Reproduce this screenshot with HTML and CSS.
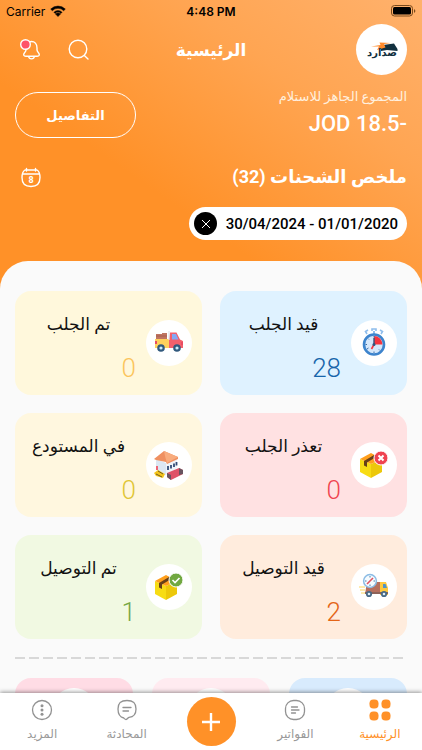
FILE: index.html
```html
<!DOCTYPE html>
<html lang="ar" dir="rtl">
<head>
    <meta charset="UTF-8">
    <meta name="viewport" content="width=device-width, initial-scale=1.0">
    <title>الرئيسية</title>
    <link rel="stylesheet" href="styles.css">
</head>
<body>

    <!-- Status bar -->
    <div class="status-bar" dir="ltr">
        <div class="carrier">
            <span>Carrier</span>
            <svg width="16" height="12" viewBox="0 0 16 12"><path d="M8 11.6 5.600 9.100a3.400 3.400 0 0 1 4.800 0zM3.900 7.300a5.800 5.800 0 0 1 8.200 0l-1.200 1.200a4.100 4.100 0 0 0-5.800 0zM.7 4.100a10.300 10.300 0 0 1 14.600 0l-1.600 1.600a8 8 0 0 0-11.400 0z" stroke="#000" stroke-width=".5"/></svg>
        </div>
        <span class="clock">4:48 PM</span>
        <div class="battery">
            <svg width="25" height="12" viewBox="0 0 25 12"><rect x=".5" y=".5" width="21" height="10.500" rx="3" fill="none" stroke="#7a4a1c"/><rect x="2" y="2" width="18" height="7.500" rx="1.500"/><path d="M23 4v4q1.400-.8 1.400-2T23 4z" fill="#7a4a1c"/></svg>
        </div>
    </div>

    <header class="header">
        <div class="top-row">
            <div class="logo">
                <svg width="34" height="24" viewBox="0 0 34 24">
                    <path d="M16 10 18 7l11-1.500 3.500 5.500v2L22 12l-6 1z" fill="#12303f"/>
                    <path d="M6 8.500 15.500 7l-1-2.500L26 5l-7 1 1.500 3.500L12 12l2-3.500z" fill="#ff8a2b"/>
                    <text x="17" y="18" text-anchor="middle" class="logo-text">صدارد</text>
                </svg>
            </div>
            <h1>الرئيسية</h1>
            <div class="actions">
                <button type="button" class="icon-btn" aria-label="بحث">
                    <svg width="24" height="24" viewBox="0 0 24 24"><circle cx="11" cy="11" r="8.800"/><path d="m17.600 17.800 3.400 3.200"/></svg>
                </button>
                <button type="button" class="icon-btn" aria-label="الإشعارات">
                    <svg width="24" height="24" viewBox="0 0 24 24"><path d="M7 10c0-4 2.300-6.500 5.500-6.500S18 6 18 10v2c0 1.200.6 1.900 1.600 3 1.400 1.600.7 3.200-1.400 3.200H6.800c-2.100 0-2.800-1.600-1.400-3.200 1-1.100 1.600-1.800 1.600-3zM9.600 18.500c.5 3.200 5.300 3.200 5.800 0"/><circle class="dot" cx="6.500" cy="6.500" r="4.800"/></svg>
                </button>
            </div>
        </div>

        <div class="balance-row">
            <div class="balance">
                <p class="balance-label">المجموع الجاهز للاستلام</p>
                <p class="amount"><bdi dir="ltr">JOD 18.5-</bdi></p>
            </div>
            <button type="button" class="details-btn">التفاصيل</button>
        </div>

        <div class="summary-row">
            <h2>ملخص الشحنات (32)</h2>
            <button type="button" class="icon-btn" aria-label="التاريخ">
                <svg width="24" height="24" viewBox="0 0 24 24"><path d="M6 5h12c2.200 1.300 3 3.500 3 7.500 0 6-2.800 9-9 9s-9-3-9-9C3 8.500 3.800 6.300 6 5zM3.500 9h17M7.500 3.500v2.500M16.500 3.500v2.500"/><text x="12" y="18" text-anchor="middle" class="cal-day">8</text></svg>
            </button>
        </div>

        <div class="date-chip">
            <bdi dir="ltr">30/04/2024 - 01/01/2020</bdi>
            <button type="button" class="clear-btn" aria-label="مسح">
                <svg width="10" height="10" viewBox="0 0 10 10"><path d="m1 1 8 8M9 1 1 9"/></svg>
            </button>
        </div>
    </header>

    <main class="sheet">
        <div class="cards">
            <a href="#" class="card blue">
                <span class="card-icon">
                    <svg width="30" height="30" viewBox="0 0 30 30">
                        <path d="M8 6 6.500 3.500 9 2M22 6l1.500-2.500L21 2M13 3V1h4v2" fill="none" stroke="#8fbdec" stroke-width="1.600"/>
                        <path d="M15 3v3" stroke="#8fbdec" stroke-width="2"/>
                        <circle cx="15" cy="16.500" r="10" fill="#d6e8fb" stroke="#3d84cd" stroke-width="2.600"/>
                        <path d="M15 16.500V8a8.500 8.500 0 0 1 8.500 8.500z" fill="#f5343f"/>
                        <path d="M15 8v1.500M6.500 16.500H8M15 25v-1.500M9 10.500l1 1M21 22.500l-1-1M8 21l1.500-1" stroke="#3d6da5"/>
                        <path d="M15 10v6.500" stroke="#32547e" stroke-width="1.400"/>
                        <path d="m15 16.500-2.500 4.500" stroke="#f5343f" stroke-width="1.600"/>
                        <circle cx="15" cy="16.500" r="1.500" fill="#32547e"/>
                    </svg>
                </span>
                <span class="card-text"><span class="card-title">قيد الجلب</span><span class="card-num">28</span></span>
            </a>
            <a href="#" class="card yellow">
                <span class="card-icon">
                    <svg width="30" height="30" viewBox="0 0 30 30">
                        <path d="M2 6h6V5h5v6H2z" fill="#bf7561"/><path d="M2 8h11" stroke="#a85e50"/>
                        <path d="M1 11h15v9H1z" fill="#ffd15c"/>
                        <path d="M16 4.500h6.500l3.500 7 3 1.500v7H15v-9z" fill="#f3606c"/>
                        <path d="M15 3v9" stroke="#dfe5ea" stroke-width="1.200"/>
                        <path d="M18 6h4l2.500 5.500H18z" fill="#85a8f5"/>
                        <path d="M1 13h2v3H1zM27 14h2v3h-2z" fill="#e94b62"/>
                        <g fill="#c9edfa" stroke="#31597d" stroke-width="2.200"><circle cx="7" cy="20" r="2.700"/><circle cx="23" cy="20" r="2.700"/></g>
                    </svg>
                </span>
                <span class="card-text"><span class="card-title">تم الجلب</span><span class="card-num">0</span></span>
            </a>
            <a href="#" class="card red">
                <span class="card-icon">
                    <svg width="30" height="30" viewBox="0 0 30 30">
                        <path d="m1 9 11 5v14L1 22z" fill="#f7dc14"/><path d="m12 14 11-5v13l-11 6z" fill="#ecc80a"/>
                        <path d="m1 9 11-6 11 6-11 5z" fill="#ff9f1c"/>
                        <path d="m5 11 10-6 3 1.400-10 6V17l-3-1.500z" fill="#674019"/>
                        <circle cx="22" cy="8" r="7" fill="#ef4351" stroke="#fff"/>
                        <path d="m19.500 5.500 5 5m0-5-5 5" stroke="#fff" stroke-width="2"/>
                    </svg>
                </span>
                <span class="card-text"><span class="card-title">تعذر الجلب</span><span class="card-num">0</span></span>
            </a>
            <a href="#" class="card cream">
                <span class="card-icon">
                    <svg width="30" height="30" viewBox="0 0 30 30">
                        <path d="m2 9 10 4v12L2 20z" fill="#dce7f3"/><path d="m12 13 11-5v10l-11 7z" fill="#f0f4f9"/>
                        <path d="m0 9 10-8 14 6v2L13 14l-1-2-10-2z" fill="#ef9061"/><path d="m10 1 14 6-11 6q-2-6-3-12z" fill="#f8ac7e"/>
                        <path d="M14 16v4M17 15v3.500M20 13.500V17M22.500 12v3.500" stroke="#334c76" stroke-width="1.800"/>
                        <path d="m0 23 4-3 7 4-2 4-7-2z" fill="#f5c51c"/><path d="m2 24 6 3m-4-6 5 3" stroke="#735d23"/>
                        <path d="m13 23 12-5 4 2v4l-12 6-4-3z" fill="#df5368"/><path d="m13 23 4 2v5l-4-3zM25 18l4 2v4l-4 1z" fill="#68545f"/>
                        <path d="M3 16v4" stroke="#ee6675" stroke-width="2"/>
                    </svg>
                </span>
                <span class="card-text"><span class="card-title">في المستودع</span><span class="card-num">0</span></span>
            </a>
            <a href="#" class="card orange">
                <span class="card-icon">
                    <svg width="30" height="30" viewBox="0 0 30 30">
                        <path d="M8 10h14v12H6z" fill="#b66f5e"/>
                        <path d="M21 10h6l2 6v7h-8z" fill="#ffc93e"/><path d="M24 12h2.500l1.500 4h-4z" fill="#4e94c9"/>
                        <path d="M6 21h23" stroke="#8d6259" stroke-width="2"/>
                        <path d="M0 15h6M1 18h5M2 21h4" stroke="#ffd75c" stroke-width="1.200"/>
                        <circle cx="11" cy="9" r="6.400" fill="#f5fbff" stroke="#8bbce5" stroke-width="1.500"/>
                        <path d="m8 12 6-6" stroke="#e05360" stroke-width="1.600"/><path d="M11 4v1.500M6 9h1.500M11 14v-1.500M16 9h-1.500" stroke="#517da5"/>
                        <g fill="#dcecf6" stroke="#486a87" stroke-width="1.800"><circle cx="10" cy="22" r="2.200"/><circle cx="25" cy="22" r="2.200"/></g>
                    </svg>
                </span>
                <span class="card-text"><span class="card-title">قيد التوصيل</span><span class="card-num">2</span></span>
            </a>
            <a href="#" class="card green">
                <span class="card-icon">
                    <svg width="30" height="30" viewBox="0 0 30 30">
                        <path d="m1 9 11 5v14L1 22z" fill="#f7dc14"/><path d="m12 14 11-5v13l-11 6z" fill="#ecc80a"/>
                        <path d="m1 9 11-6 11 6-11 5z" fill="#ff9f1c"/>
                        <path d="m5 11 10-6 3 1.400-10 6V17l-3-1.500z" fill="#674019"/>
                        <circle cx="22" cy="8" r="7" fill="#71a841" stroke="#fff"/>
                        <path d="m18.500 8 2.500 2.500 4.500-4.500" fill="none" stroke="#fff" stroke-width="1.600"/>
                    </svg>
                </span>
                <span class="card-text"><span class="card-title">تم التوصيل</span><span class="card-num">1</span></span>
            </a>
        </div>

        <hr class="divider">

        <div class="mini-cards">
            <div class="mini sky"><span class="card-icon"></span></div>
            <div class="mini rose"><span class="card-icon"></span></div>
            <div class="mini pink"><span class="card-icon"></span></div>
        </div>
    </main>

    <nav class="tabs">
        <a href="#" class="tab active">
            <svg width="22" height="22" viewBox="0 0 22 22"><rect x=".5" y=".5" width="9" height="9" rx="3.800"/><rect x="12.500" y=".5" width="9" height="9" rx="3.800"/><rect x=".5" y="12.500" width="9" height="9" rx="3.800"/><rect x="12.500" y="12.500" width="9" height="9" rx="3.800"/></svg>
            <span>الرئيسية</span>
        </a>
        <a href="#" class="tab">
            <svg width="22" height="22" viewBox="0 0 22 22"><rect x="1.500" y="1.500" width="19" height="19" rx="8"/><path d="M7.500 8h6M7.500 11h7.500M7.500 14h4"/></svg>
            <span>الفواتير</span>
        </a>
        <button type="button" class="add-btn" aria-label="إضافة">
            <svg width="20" height="20" viewBox="0 0 20 20"><path d="M10 1v18M1 10h18"/></svg>
        </button>
        <a href="#" class="tab">
            <svg width="22" height="22" viewBox="0 0 22 22"><path d="M11 1.500c6.500 0 9 2.800 9 8.500 0 6-2.500 8-7 8.300-1 .1-1.600 2.200-3 2.200-1.200 0-1.600-.6-2.200-1.500C3.500 18 2 15 2 10c0-5.700 2.500-8.500 9-8.500zM7 8.500h8M7 12h5.500"/></svg>
            <span>المحادثة</span>
        </a>
        <a href="#" class="tab">
            <svg width="22" height="22" viewBox="0 0 22 22"><circle cx="11" cy="11" r="9.500"/><g class="dots"><circle cx="11" cy="6.800" r="1.500"/><circle cx="11" cy="11" r="1.500"/><circle cx="11" cy="15.200" r="1.500"/></g></svg>
            <span>المزيد</span>
        </a>
    </nav>

</body>
</html>
```
FILE: styles.css
```css
* {
    margin: 0;
    padding: 0;
    box-sizing: border-box;
}

body {
    display: flex;
    flex-direction: column;
    height: 100vh;
    overflow: hidden;
    font-family: Roboto, 'DejaVu Sans', sans-serif;
    color: #111;
    background: #ff9128 linear-gradient(215deg, #ffb16c 0, #ffa552 140px, #ff9128 310px) no-repeat;
}

a {
    color: inherit;
    text-decoration: none;
}

button {
    font-family: inherit;
    border: none;
    background: none;
    cursor: pointer;
}

svg {
    display: block;
}

/* Status bar */
.status-bar {
    display: grid;
    grid-template-columns: 1fr auto 1fr;
    align-items: center;
    height: 22px;
    padding: 0 6px;
    font-family: Inter, sans-serif;
    font-size: 12px;
    color: #000;
}

.carrier {
    display: flex;
    align-items: center;
    gap: 5px;
}

.clock {
    font-weight: 600;
}

.battery {
    display: flex;
    justify-content: flex-end;
}

/* Header */
.header {
    padding: 2px 15px 21px;
    color: #fff;
}

.top-row {
    display: grid;
    grid-template-columns: 1fr auto 1fr;
    align-items: center;
}

.logo {
    display: flex;
    align-items: center;
    justify-content: center;
    width: 51px;
    height: 51px;
    border-radius: 50%;
    background-color: #fff;
}

.logo-text {
    font-family: 'DejaVu Sans', sans-serif;
    font-size: 10px;
    font-weight: bold;
    fill: #12303f;
}

h1 {
    font-size: 17px;
    font-weight: bold;
}

.actions {
    display: flex;
    justify-content: flex-end;
    gap: 24px;
    padding-left: 4px;
}

.icon-btn svg {
    fill: none;
    stroke: #fff;
    stroke-width: 1.4;
    stroke-linecap: round;
    stroke-linejoin: round;
}

.icon-btn .dot {
    fill: #ff5468;
}

.icon-btn .cal-day {
    font-size: 9px;
    font-weight: bold;
    fill: #fff;
    stroke: none;
}

.balance-row {
    display: flex;
    justify-content: space-between;
    align-items: flex-end;
    margin-top: 12px;
}

.balance-label {
    font-size: 13px;
    line-height: 20px;
    color: #fff0df;
}

.amount {
    font-size: 22px;
    font-weight: 500;
    line-height: 34px;
}

.details-btn {
    width: 121px;
    height: 46px;
    margin-bottom: 3px;
    border: 1px solid #fff;
    border-radius: 23px;
    font-size: 13px;
    font-weight: bold;
    color: #fff;
}

.summary-row {
    display: flex;
    justify-content: space-between;
    align-items: center;
    margin-top: 20px;
    padding-left: 4px;
}

h2 {
    font-size: 18px;
    font-weight: bold;
    line-height: 32px;
}

.date-chip {
    display: flex;
    align-items: center;
    justify-content: space-between;
    width: 218px;
    height: 33px;
    margin-top: 14px;
    padding: 0 9px 0 5px;
    border-radius: 17px;
    font-size: 15px;
    font-weight: 500;
    color: #000;
    background-color: #fff;
}

.clear-btn {
    display: flex;
    align-items: center;
    justify-content: center;
    width: 23px;
    height: 23px;
    border-radius: 50%;
    background-color: #000;
}

.clear-btn svg {
    stroke: #fff;
}

/* Content sheet */
.sheet {
    flex: 1;
    min-height: 0;
    overflow: hidden;
    padding: 30px 15px 0;
    border-radius: 28px 28px 0 0;
    background-color: #fafafa;
}

.cards {
    display: grid;
    grid-template-columns: 1fr 1fr;
    gap: 18px;
}

.card {
    display: flex;
    align-items: center;
    gap: 10px;
    height: 104px;
    padding: 0 10px 0 6px;
    border-radius: 16px;
}

.card-icon {
    display: flex;
    flex: none;
    align-items: center;
    justify-content: center;
    width: 46px;
    height: 46px;
    border-radius: 50%;
    background-color: #fff;
}

.card-text {
    display: flex;
    flex: 1;
    flex-direction: column;
    gap: 14px;
    padding-top: 6px;
}

.card-title {
    font-size: 17px;
    line-height: 30px;
    text-align: center;
    white-space: nowrap;
}

.card-num {
    font-size: 26px;
    font-weight: 300;
    line-height: 30px;
}

.blue { background-color: #dff2ff; }
.yellow { background-color: #fff8dc; }
.red { background-color: #ffe1e2; }
.cream { background-color: #fff7df; }
.orange { background-color: #ffecdd; }
.green { background-color: #f1f9e2; }

.blue .card-num { color: #1765ab; }
.yellow .card-num { color: #fbc55c; }
.red .card-num { color: #f04550; }
.cream .card-num { color: #dfc637; }
.orange .card-num { color: #e46517; }
.green .card-num { color: #76a845; }

.divider {
    height: 2px;
    margin: 18px 0 19px;
    border: none;
    background: repeating-linear-gradient(to right, #d8d8d8 0 10px, transparent 10px 14px);
}

.mini-cards {
    display: grid;
    grid-template-columns: repeat(3, 1fr);
    gap: 19px;
}

.mini {
    display: flex;
    justify-content: center;
    height: 104px;
    padding-top: 10px;
    border-radius: 16px;
}

.sky { background-color: #d8ebfd; }
.rose { background-color: #ffebf0; }
.pink { background-color: #ffdce5; }

/* Bottom tabs */
.tabs {
    display: grid;
    grid-template-columns: repeat(5, 1fr);
    align-items: center;
    justify-items: center;
    height: 57px;
    background-color: #fff;
    box-shadow: 0 -1px 4px rgba(0, 0, 0, 0.4);
    z-index: 1;
}

.tab {
    display: flex;
    flex-direction: column;
    align-items: center;
    gap: 4px;
    padding-bottom: 2px;
    font-size: 12px;
    line-height: 18px;
    color: #999;
}

.tab svg {
    fill: none;
    stroke: #929292;
    stroke-width: 1.3;
    stroke-linecap: round;
}

.tab .dots {
    fill: #929292;
    stroke: none;
}

.tab.active {
    color: #ff9128;
}

.tab.active svg {
    fill: #ff9128;
    stroke: none;
}

.add-btn {
    display: flex;
    align-items: center;
    justify-content: center;
    width: 49px;
    height: 49px;
    border-radius: 50%;
    background-color: #ff9128;
}

.add-btn svg {
    stroke: #fff;
    stroke-width: 2.4;
}
```
